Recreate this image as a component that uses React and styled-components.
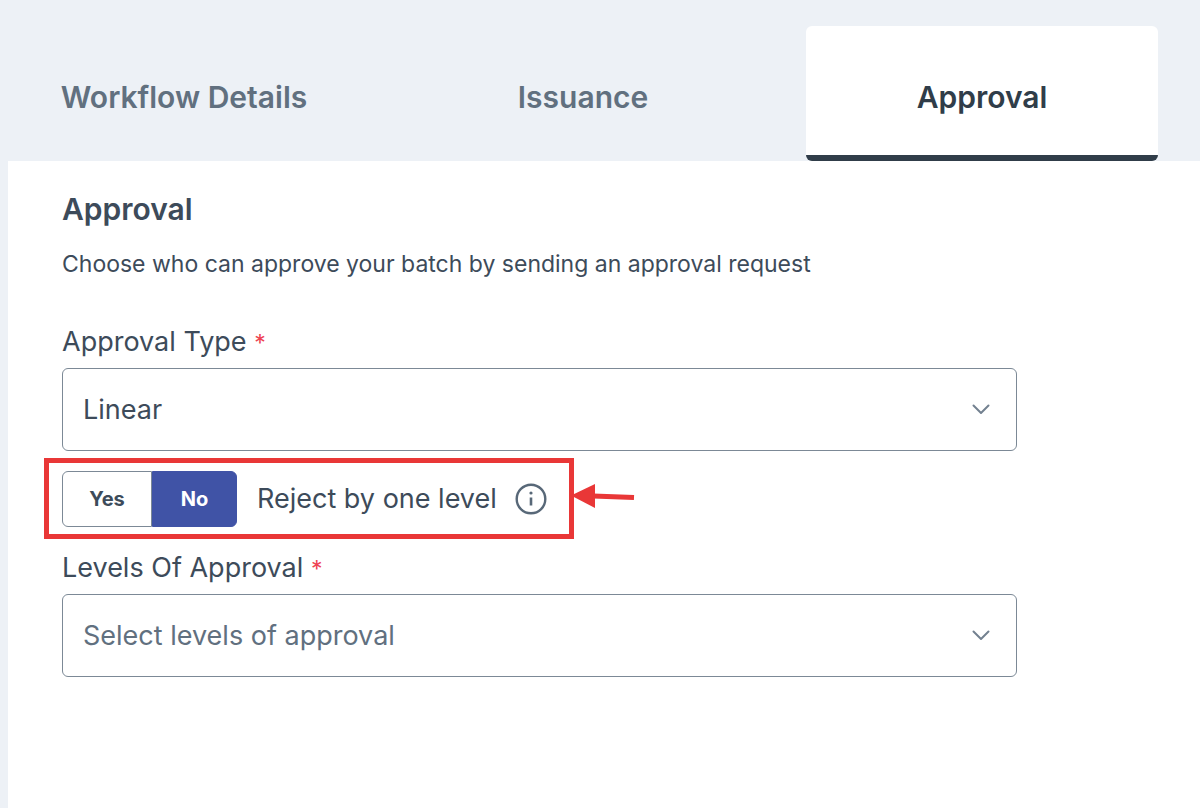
import React, { useState } from 'react';
import styled, { createGlobalStyle } from 'styled-components';

const GlobalStyle = createGlobalStyle`
  * {
    box-sizing: border-box;
  }

  body {
    margin: 0;
    background-color: #edf1f6;
    color: #3d4b5a;
    font-family: Inter, 'Liberation Sans', sans-serif;
  }
`;

const Page = styled.div`
  display: flex;
  flex-direction: column;
  min-height: 100vh;
  padding: 26px 0 0 8px;
`;

const TabList = styled.div`
  display: grid;
  grid-template-columns: repeat(3, 1fr);
  gap: 47px;
  padding-right: 42px;
`;

const Tab = styled.button`
  padding: 54px 0 41px;
  border: none;
  border-bottom: 6px solid ${({ $active }) => ($active ? '#303d49' : 'transparent')};
  border-radius: 6px;
  background-color: ${({ $active }) => ($active ? '#ffffff' : 'transparent')};
  color: ${({ $active }) => ($active ? '#303d49' : '#61707f')};
  font-family: inherit;
  font-size: 30px;
  font-weight: 600;
  line-height: 34px;
  white-space: nowrap;
  cursor: pointer;
`;

const Panel = styled.main`
  flex: 1;
  padding: 31px 183px 48px 54px;
  background-color: #ffffff;
`;

const Title = styled.h1`
  margin: 0;
  font-size: 30px;
  font-weight: 600;
  line-height: 34px;
`;

const Description = styled.p`
  margin: 21px 0 44px;
  font-size: 23px;
  line-height: 34px;
`;

const Label = styled.label`
  display: block;
  margin-bottom: 9px;
  font-size: 27px;
  line-height: 34px;
`;

const Required = styled.span`
  color: #ee4352;
  font-size: 23px;
  line-height: 20px;
`;

const SelectBox = styled.div`
  display: grid;
  align-items: center;

  > * {
    grid-area: 1 / 1;
  }
`;

const Select = styled.select`
  width: 100%;
  height: 83px;
  padding: 0 60px 0 20px;
  appearance: none;
  border: 1px solid #7c8996;
  border-radius: 6px;
  background-color: #ffffff;
  color: ${({ $empty }) => ($empty ? '#61707f' : '#3d4b5a')};
  font-family: inherit;
  font-size: 27px;
`;

const Chevron = styled.svg`
  justify-self: end;
  width: 18px;
  height: 12px;
  margin-right: 27px;
  fill: none;
  stroke: #738190;
  stroke-width: 2;
  stroke-linecap: round;
  stroke-linejoin: round;
  pointer-events: none;
`;

const RejectRow = styled.div`
  position: relative;
  display: flex;
  align-items: center;
  width: fit-content;
  margin: 20px 0 24px;
`;

const ToggleGroup = styled.div`
  display: flex;
  margin-right: 20px;
`;

const Toggle = styled.button`
  width: ${({ $active }) => ($active ? '85px' : '90px')};
  height: 56px;
  padding: 0;
  border: 1px solid ${({ $active }) => ($active ? '#4053a6' : '#7c8996')};
  background-color: ${({ $active }) => ($active ? '#4053a6' : '#ffffff')};
  color: ${({ $active }) => ($active ? '#ffffff' : '#3d4b5a')};
  font-family: inherit;
  font-size: 20px;
  font-weight: 700;
  cursor: pointer;

  &:first-child {
    border-radius: 6px 0 0 6px;
  }

  &:last-child {
    border-radius: 0 6px 6px 0;
  }
`;

const RejectText = styled.span`
  margin-right: 18px;
  font-size: 27px;
  line-height: 34px;
`;

const InfoIcon = styled.svg`
  width: 32px;
  height: 32px;
  fill: none;
  stroke: #586878;
`;

// Red frame and arrow drawn over the form
const Highlight = styled.div`
  position: absolute;
  inset: -13px -27px -12px -18px;
  border: 5px solid #e93737;
  pointer-events: none;
`;

const Arrow = styled.svg`
  position: absolute;
  top: 12px;
  left: 100%;
  width: 64px;
  height: 28px;
  margin-left: 24px;
  fill: #e93737;
  stroke: #e93737;
`;

const tabs = ['Workflow Details', 'Issuance', 'Approval'];

function Dropdown({ id, label, options, value, onChange }) {
  return (
    <>
      <Label htmlFor={id}>
        {label} <Required>*</Required>
      </Label>
      <SelectBox>
        <Select
          id={id}
          value={value}
          $empty={!value}
          onChange={(e) => onChange(e.target.value)}
        >
          {options.map((option) => (
            <option key={option.label} value={option.value}>
              {option.label}
            </option>
          ))}
        </Select>
        <Chevron viewBox="0 0 18 12" aria-hidden="true">
          <path d="M1.5 1.5L9 9 16.5 1.5" />
        </Chevron>
      </SelectBox>
    </>
  );
}

function App() {
  const [activeTab, setActiveTab] = useState('Approval');
  const [type, setType] = useState('linear');
  const [levels, setLevels] = useState('');
  const [reject, setReject] = useState('No');

  return (
    <>
      <GlobalStyle />
      <Page>
        <TabList role="tablist">
          {tabs.map((tab) => (
            <Tab
              key={tab}
              type="button"
              role="tab"
              aria-selected={tab === activeTab}
              $active={tab === activeTab}
              onClick={() => setActiveTab(tab)}
            >
              {tab}
            </Tab>
          ))}
        </TabList>

        <Panel>
          <Title>Approval</Title>
          <Description>
            Choose who can approve your batch by sending an approval request
          </Description>

          <Dropdown
            id="approval-type"
            label="Approval Type"
            options={[{ value: 'linear', label: 'Linear' }]}
            value={type}
            onChange={setType}
          />

          <RejectRow>
            <ToggleGroup role="group" aria-labelledby="reject-label">
              {['Yes', 'No'].map((option) => (
                <Toggle
                  key={option}
                  type="button"
                  aria-pressed={option === reject}
                  $active={option === reject}
                  onClick={() => setReject(option)}
                >
                  {option}
                </Toggle>
              ))}
            </ToggleGroup>
            <RejectText id="reject-label">Reject by one level</RejectText>
            <InfoIcon viewBox="0 0 32 32" aria-hidden="true">
              <circle cx="16" cy="16" r="14.3" strokeWidth="2.4" />
              <path d="M16 14.5v8" strokeWidth="2.6" />
              <circle cx="16" cy="10" r="1.6" fill="#586878" stroke="none" />
            </InfoIcon>
            <Highlight />
            <Arrow viewBox="0 0 64 28" aria-hidden="true">
              <path d="M0 12.5L24 1v24z" stroke="none" />
              <path d="M22 13l41 1.6" strokeWidth="5" />
            </Arrow>
          </RejectRow>

          <Dropdown
            id="levels"
            label="Levels Of Approval"
            options={[{ value: '', label: 'Select levels of approval' }]}
            value={levels}
            onChange={setLevels}
          />
        </Panel>
      </Page>
    </>
  );
}

export default App;
